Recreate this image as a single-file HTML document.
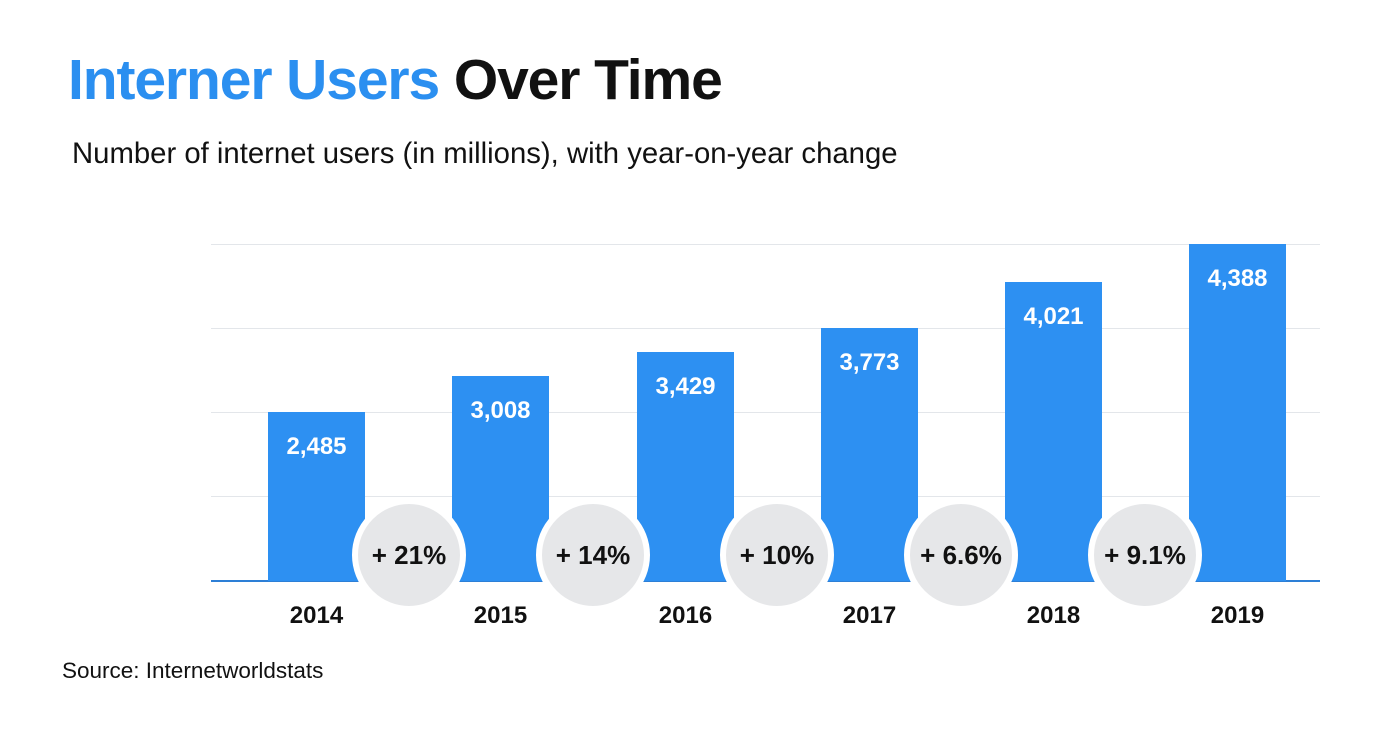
<!DOCTYPE html><html><head><style>
body{margin:0;width:1400px;height:732px;background:#fff;position:relative;font-family:"Liberation Sans",sans-serif;overflow:hidden}
.a{position:absolute}
.bar{position:absolute;background:#2d90f2;width:97px;bottom:151px}
.v{position:absolute;width:97px;text-align:center;color:#fff;font-size:24px;font-weight:bold}
.g{position:absolute;left:211px;width:1109px;height:1px;background:#e3e6ea}
.c{position:absolute;width:102px;height:102px;border-radius:50%;background:#e6e7e9;border:6px solid #fff;top:498px;display:flex;align-items:center;justify-content:center;font-size:26px;font-weight:bold;color:#111}
.y{position:absolute;top:602px;width:97px;text-align:center;font-size:24px;font-weight:bold;color:#111}
</style></head><body>
<div class="a" style="left:68px;top:47px;font-size:57px;font-weight:bold;letter-spacing:-1.1px;color:#111"><span style="color:#2b8ff0">Interner Users</span> Over Time</div>
<div class="a" style="left:72px;top:137px;font-size:29.3px;color:#111">Number of internet users (in millions), with year-on-year change</div>
<div class="g" style="top:244px"></div><div class="g" style="top:328px"></div><div class="g" style="top:412px"></div><div class="g" style="top:496px"></div>
<div class="a" style="left:211px;top:580px;width:1109px;height:2px;background:#2d7fd6"></div>
<div class="bar" style="left:268px;top:412px"></div><div class="v" style="left:268px;top:433px">2,485</div>
<div class="bar" style="left:452px;top:376px"></div><div class="v" style="left:452px;top:397px">3,008</div>
<div class="bar" style="left:637px;top:352px"></div><div class="v" style="left:637px;top:373px">3,429</div>
<div class="bar" style="left:821px;top:328px"></div><div class="v" style="left:821px;top:349px">3,773</div>
<div class="bar" style="left:1005px;top:282px"></div><div class="v" style="left:1005px;top:303px">4,021</div>
<div class="bar" style="left:1189px;top:244px"></div><div class="v" style="left:1189px;top:265px">4,388</div>
<div class="c" style="left:352px">+ 21%</div>
<div class="c" style="left:536px">+ 14%</div>
<div class="c" style="left:720px">+ 10%</div>
<div class="c" style="left:904px">+ 6.6%</div>
<div class="c" style="left:1088px">+ 9.1%</div>
<div class="y" style="left:268px">2014</div><div class="y" style="left:452px">2015</div><div class="y" style="left:637px">2016</div><div class="y" style="left:821px">2017</div><div class="y" style="left:1005px">2018</div><div class="y" style="left:1189px">2019</div>
<div class="a" style="left:62px;top:658px;font-size:22.5px;color:#111">Source: Internetworldstats</div>
</body></html>
